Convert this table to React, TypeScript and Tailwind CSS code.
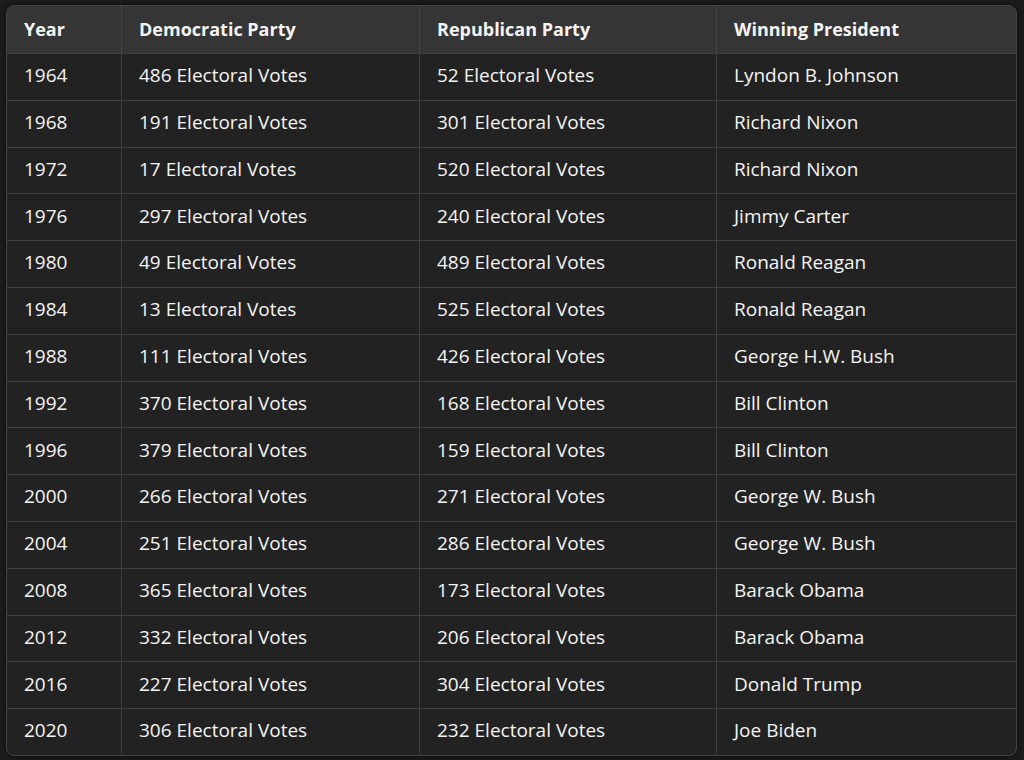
import React from 'react';

const rows: [string, string, string, string][] = [
  ['1964', '486 Electoral Votes', '52 Electoral Votes', 'Lyndon B. Johnson'],
  ['1968', '191 Electoral Votes', '301 Electoral Votes', 'Richard Nixon'],
  ['1972', '17 Electoral Votes', '520 Electoral Votes', 'Richard Nixon'],
  ['1976', '297 Electoral Votes', '240 Electoral Votes', 'Jimmy Carter'],
  ['1980', '49 Electoral Votes', '489 Electoral Votes', 'Ronald Reagan'],
  ['1984', '13 Electoral Votes', '525 Electoral Votes', 'Ronald Reagan'],
  ['1988', '111 Electoral Votes', '426 Electoral Votes', 'George H.W. Bush'],
  ['1992', '370 Electoral Votes', '168 Electoral Votes', 'Bill Clinton'],
  ['1996', '379 Electoral Votes', '159 Electoral Votes', 'Bill Clinton'],
  ['2000', '266 Electoral Votes', '271 Electoral Votes', 'George W. Bush'],
  ['2004', '251 Electoral Votes', '286 Electoral Votes', 'George W. Bush'],
  ['2008', '365 Electoral Votes', '173 Electoral Votes', 'Barack Obama'],
  ['2012', '332 Electoral Votes', '206 Electoral Votes', 'Barack Obama'],
  ['2016', '227 Electoral Votes', '304 Electoral Votes', 'Donald Trump'],
  ['2020', '306 Electoral Votes', '232 Electoral Votes', 'Joe Biden'],
];

const cols = 'grid grid-cols-[114px_298px_297px_1fr]';

const ElectionTable = () => {
  return (
    <div className="w-[1024px] h-[760px] bg-[#1c1c1c] pt-[5px] pl-[6px] font-['Open_Sans',sans-serif] text-[#f4f4f4]">
      <div className="w-[1011px] rounded-lg border border-[#454545] overflow-hidden bg-[#222222] shadow-[0_0_6px_rgba(0,0,0,0.6)]">
        <div className={`${cols} h-[47px] bg-[#353535] font-bold text-[18px]`}>
          {['Year', 'Democratic Party', 'Republican Party', 'Winning President'].map((h, i) => (
            <div key={h} className={`flex items-center pl-[17px] pb-[1px] ${i > 0 ? 'border-l border-[#444]' : ''}`}>
              {h}
            </div>
          ))}
        </div>
        {rows.map((r) => (
          <div key={r[0]} className={`${cols} h-[46.8px] border-t border-[#3f3f3f] text-[19px]`}>
            {r.map((c, i) => (
              <div key={i} className={`flex items-center pl-[17px] pb-[3px] ${i > 0 ? 'border-l border-[#3f3f3f]' : ''}`}>
                {c}
              </div>
            ))}
          </div>
        ))}
      </div>
    </div>
  );
};

export default function App() {
  return <ElectionTable />;
}
